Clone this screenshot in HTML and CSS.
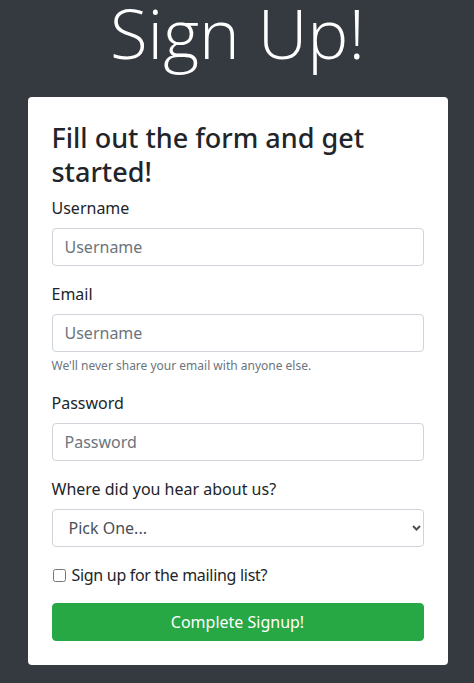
FILE: index.html
```html
<!DOCTYPE html>
<html lang="en">
<head>
<meta charset="utf-8">
<title>Sign Up</title>
<link rel="stylesheet" href="styles.css">
</head>
<body>
<main class="page">
  <h1 class="title">Sign Up!</h1>
  <section class="card">
    <h3 class="card-title">Fill out the form and get started!</h3>
    <form class="form">
      <div class="group">
        <label class="label" for="username">Username</label>
        <input class="control" id="username" type="text" placeholder="Username">
      </div>
      <div class="group">
        <label class="label" for="email">Email</label>
        <input class="control" id="email" type="email" placeholder="Username">
        <small class="help">We'll never share your email with anyone else.</small>
      </div>
      <div class="group">
        <label class="label" for="password">Password</label>
        <input class="control" id="password" type="password" placeholder="Password">
      </div>
      <div class="group">
        <label class="label" for="source">Where did you hear about us?</label>
        <div class="select-wrap">
          <select class="control select" id="source">
            <option>Pick One...</option>
          </select>
          <svg class="chevron" width="9" height="6" viewBox="0 0 9 6"><path d="M1 1 L4.5 4.5 L8 1" fill="none" stroke="#495057" stroke-width="2"/></svg>
        </div>
      </div>
      <div class="group check">
        <input class="checkbox" id="mailing" type="checkbox">
        <label class="check-label" for="mailing">Sign up for the mailing list?</label>
      </div>
      <button class="btn" type="button">Complete Signup!</button>
    </form>
  </section>
</main>
</body>
</html>
```
FILE: styles.css
```css
* { box-sizing: border-box; }
html, body { margin: 0; padding: 0; }
body {
  background: #343a40;
  font-family: "Noto Sans", "Open Sans", sans-serif;
  color: #212529;
  font-size: 16px;
  line-height: 1.5;
  height: 683px;
  overflow: hidden;
}
.page {
  display: flex;
  flex-direction: column;
  align-items: center;
  padding-left: 1px;
}
.title {
  margin: 0;
  font-weight: 300;
  font-size: 69px;
  line-height: 64px;
  color: #fff;
  height: 97px;
  font-family: "Open Sans", "Noto Sans", sans-serif;
}
.card {
  width: 420px;
  background: #fff;
  border-radius: 4px;
  padding: 24px;
}
.card-title {
  margin: 0 0 8px 0;
  font-size: 27px;
  font-weight: 500;
  line-height: 33.6px;
}
.form { display: flex; flex-direction: column; }
.group {
  display: flex;
  flex-direction: column;
  margin-bottom: 16px;
}
.label {
  margin-bottom: 8px;
  line-height: 24px;
}
.control {
  height: 38px;
  width: 100%;
  border: 1px solid #ced4da;
  border-radius: 4px;
  padding: 6px 12px;
  font: inherit;
  font-size: 16px;
  color: #495057;
  background: #fff;
}
.control::placeholder { color: #6c757d; opacity: 1; }
.help {
  margin-top: 4px;
  font-size: 12px;
  line-height: 19.2px;
  color: #6c757d;
}
.select-wrap { position: relative; }
.select {
  appearance: none;
  -webkit-appearance: none;
  padding-left: 16px;
  color: #495057;
}
.chevron {
  position: absolute;
  right: 3px;
  top: 16px;
}
.check {
  flex-direction: row;
  align-items: center;
  height: 24px;
}
.checkbox {
  width: 13px;
  height: 13px;
  margin: 0 6px 0 1px;
}
.check-label { line-height: 24px; letter-spacing: -0.3px; }
.btn {
  height: 38px;
  width: 100%;
  border: 1px solid #28a745;
  border-radius: 4px;
  background: #28a745;
  color: #fff;
  font: inherit;
  font-size: 16px;
}
```
